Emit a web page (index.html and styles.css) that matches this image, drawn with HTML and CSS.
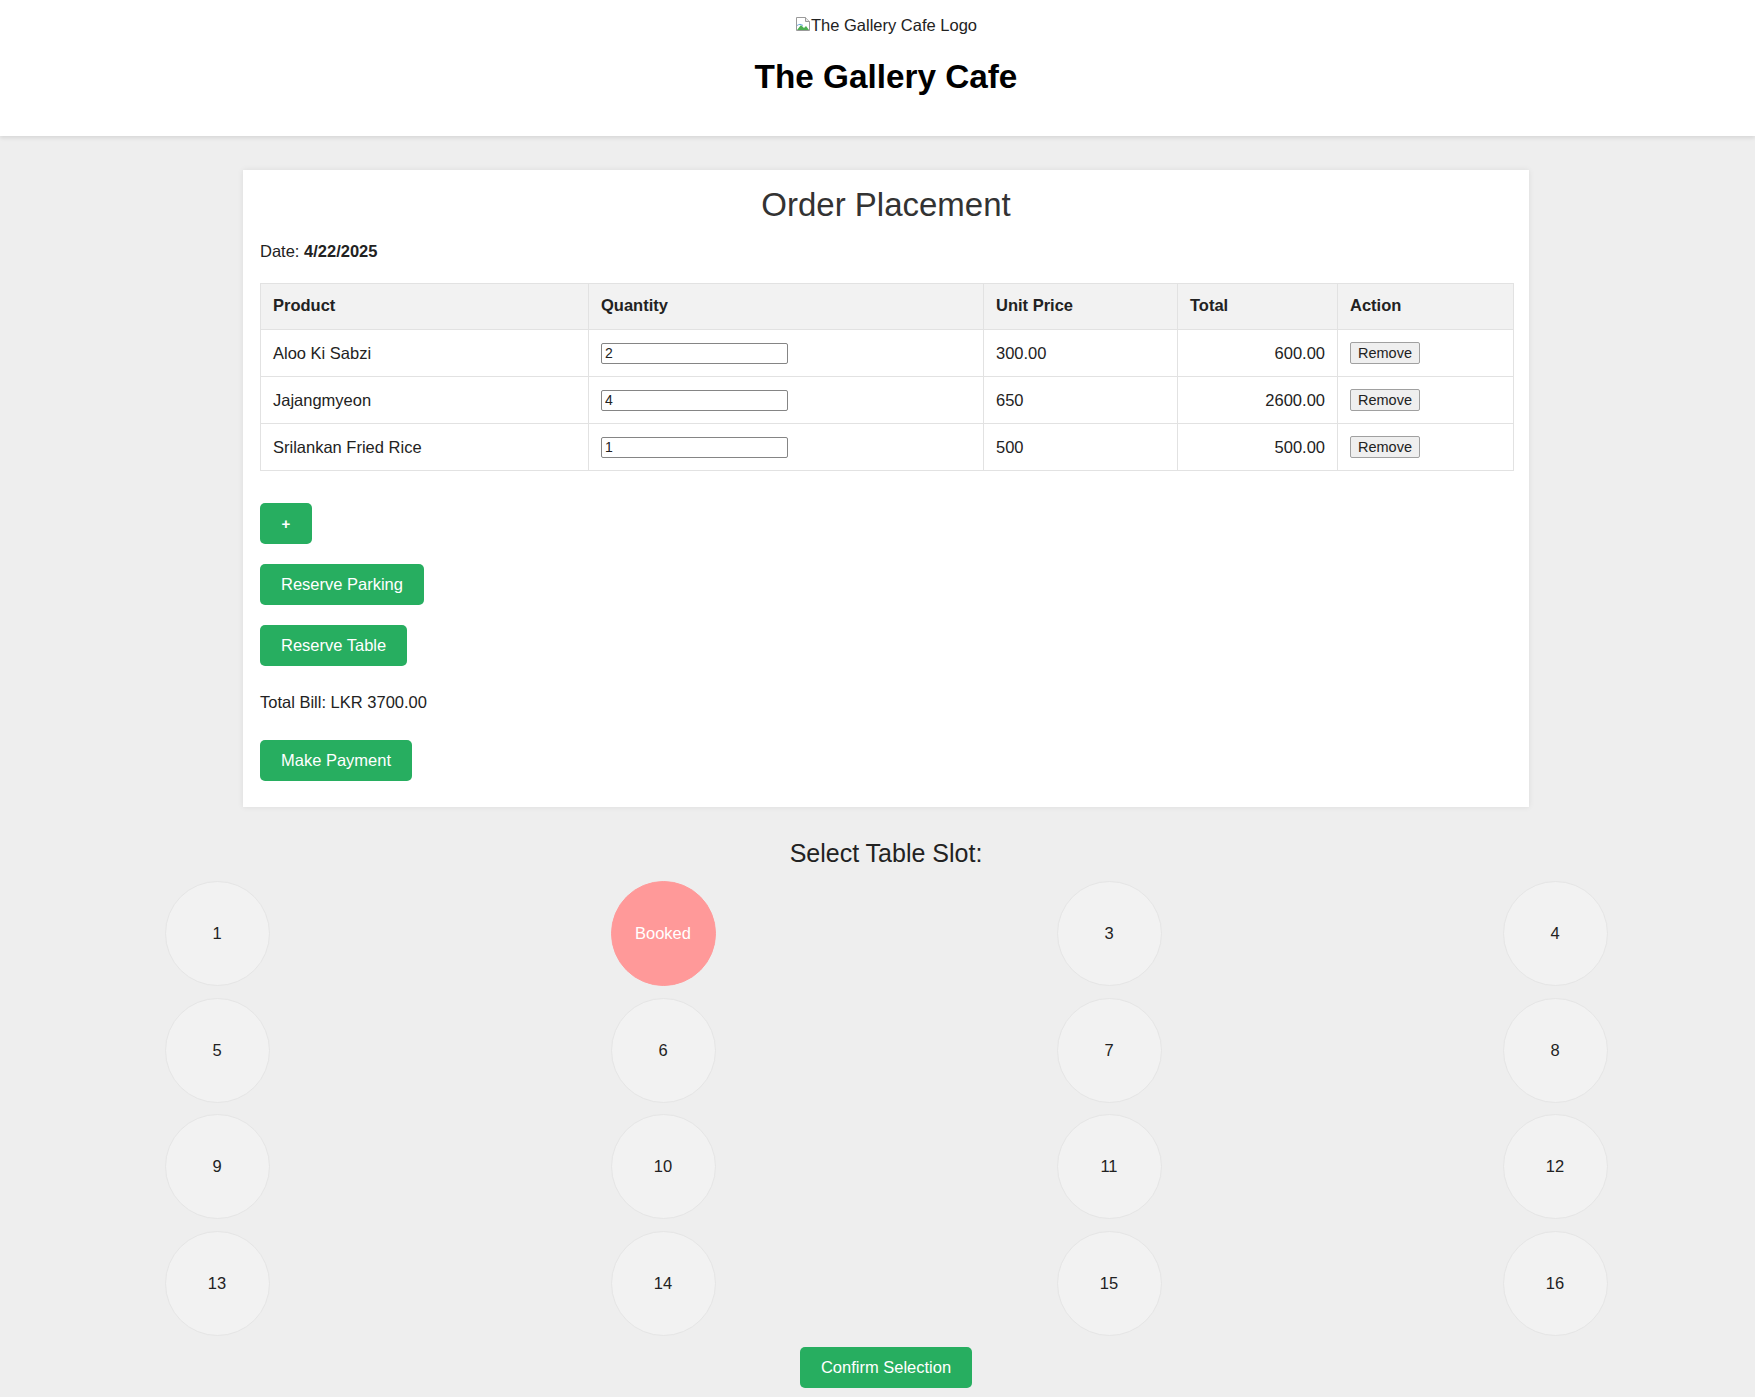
FILE: index.html
```html
<!DOCTYPE html>
<html lang="en">
<head>
<meta charset="utf-8">
<title>The Gallery Cafe - Order Placement</title>
<link rel="stylesheet" href="styles.css">
</head>
<body>
<header class="site-header">
  <div class="header-inner">
    <div class="logo-alt">
      <svg class="broken-img" width="16" height="16" viewBox="0 0 16 16" aria-hidden="true">
        <path d="M1.5 1.5h9l4 4v9h-13z" fill="#fff" stroke="#9a9a9a"/>
        <path d="M10.5 1.5v4h4" fill="#e8e8e8" stroke="#9a9a9a"/>
        <path d="M2 14l4-5 3 3 2-2 3 4z" fill="#4caf50"/>
        <path d="M2 9.5c2-1.5 4-1.5 6 0" fill="none" stroke="#6fa8dc" stroke-width="1"/>
      </svg><span>The Gallery Cafe Logo</span>
    </div>
    <h1 class="site-title">The Gallery Cafe</h1>
  </div>
</header>

<main class="page">
  <section class="card">
    <h2 class="card-title">Order Placement</h2>
    <p class="date">Date: <strong>4/22/2025</strong></p>

    <table class="order-table">
      <colgroup>
        <col class="c-product">
        <col class="c-qty">
        <col class="c-price">
        <col class="c-total">
        <col class="c-action">
      </colgroup>
      <thead>
        <tr>
          <th>Product</th>
          <th>Quantity</th>
          <th>Unit Price</th>
          <th>Total</th>
          <th>Action</th>
        </tr>
      </thead>
      <tbody>
        <tr>
          <td>Aloo Ki Sabzi</td>
          <td><input class="qty" type="text" value="2"></td>
          <td>300.00</td>
          <td class="num">600.00</td>
          <td><button class="remove">Remove</button></td>
        </tr>
        <tr>
          <td>Jajangmyeon</td>
          <td><input class="qty" type="text" value="4"></td>
          <td>650</td>
          <td class="num">2600.00</td>
          <td><button class="remove">Remove</button></td>
        </tr>
        <tr>
          <td>Srilankan Fried Rice</td>
          <td><input class="qty" type="text" value="1"></td>
          <td>500</td>
          <td class="num">500.00</td>
          <td><button class="remove">Remove</button></td>
        </tr>
      </tbody>
    </table>

    <div class="actions">
      <button class="btn btn-add">+</button>
      <button class="btn">Reserve Parking</button>
      <button class="btn">Reserve Table</button>
      <p class="total-bill">Total Bill: LKR 3700.00</p>
      <button class="btn">Make Payment</button>
    </div>
  </section>

  <section class="slots">
    <h3 class="slots-title">Select Table Slot:</h3>
    <div class="slot-grid">
      <div class="slot">1</div>
      <div class="slot booked">Booked</div>
      <div class="slot">3</div>
      <div class="slot">4</div>
      <div class="slot">5</div>
      <div class="slot">6</div>
      <div class="slot">7</div>
      <div class="slot">8</div>
      <div class="slot">9</div>
      <div class="slot">10</div>
      <div class="slot">11</div>
      <div class="slot">12</div>
      <div class="slot">13</div>
      <div class="slot">14</div>
      <div class="slot">15</div>
      <div class="slot">16</div>
    </div>
    <div class="confirm-wrap">
      <button class="btn">Confirm Selection</button>
    </div>
  </section>
</main>
</body>
</html>
```

FILE: styles.css
```css
* {
  box-sizing: border-box;
}

html, body {
  margin: 0;
  padding: 0;
}

body {
  background: #eeeeee;
  font-family: "Liberation Sans", Arial, sans-serif;
  font-size: 16.5px;
  color: #222;
}

.site-header {
  background: #fff;
  box-shadow: 0 2px 4px rgba(0, 0, 0, 0.1);
  height: 136px;
}

.header-inner {
  padding: 15px 0 0 17px;
  text-align: center;
}

.logo-alt {
  height: 20px;
  line-height: 20px;
  display: flex;
  justify-content: center;
  align-items: center;
  color: #222;
  font-size: 16.5px;
}

.broken-img {
  display: block;
  margin-top: -2px;
}

.site-title {
  margin: 22px 0 0;
  font-size: 33.3px;
  line-height: 39px;
  font-weight: bold;
  color: #000;
}

.page {
  padding-left: 17px;
}

.card {
  width: 1286px;
  margin: 34px auto 0;
  background: #fff;
  padding: 15px 17px 26px;
  box-shadow: 0 0 6px rgba(0, 0, 0, 0.08);
}

.card-title {
  margin: 0 0 17px;
  text-align: center;
  font-size: 33px;
  line-height: 39px;
  font-weight: normal;
  color: #333;
}

.date {
  margin: 0 0 22px;
  line-height: 20px;
}

.order-table {
  width: 100%;
  border-collapse: collapse;
  table-layout: fixed;
}

.c-product { width: 328px; }
.c-qty { width: 395px; }
.c-price { width: 194px; }
.c-total { width: 160px; }
.c-action { width: 176px; }

.order-table th,
.order-table td {
  border: 1px solid #e2e2e2;
  padding: 12px 12px;
  line-height: 20px;
  text-align: left;
  vertical-align: middle;
}

.order-table th {
  background: #f2f2f2;
  font-weight: bold;
  padding-top: 11px;
  padding-bottom: 14px;
}

.order-table td.num {
  text-align: right;
}

.qty {
  display: block;
  width: 187px;
  height: 21px;
  margin: 0;
  padding: 1px 3px;
  border: 1px solid #858585;
  border-radius: 2px;
  font-family: "Liberation Sans", Arial, sans-serif;
  font-size: 14px;
  color: #222;
  background: #fff;
}

.remove {
  height: 22px;
  padding: 0 7px;
  border: 1px solid #a0a0a0;
  border-radius: 2px;
  background: #efefef;
  font-family: "Liberation Sans", Arial, sans-serif;
  font-size: 14.5px;
  color: #222;
  display: block;
}

.actions {
  display: flex;
  flex-direction: column;
  align-items: flex-start;
  padding-top: 32px;
}

.btn {
  display: inline-block;
  height: 41px;
  padding: 0 21px;
  border: none;
  border-radius: 5px;
  background: #27ae60;
  color: #fff;
  font-family: "Liberation Sans", Arial, sans-serif;
  font-size: 16.5px;
  line-height: 41px;
}

.actions .btn + .btn {
  margin-top: 20px;
}

.btn-add {
  width: 52px;
  padding: 0;
  font-size: 15px;
  font-weight: bold;
}

.total-bill {
  margin: 26px 0 28px;
  line-height: 20px;
  color: #222;
}

.slots {
  padding-top: 32px;
  text-align: center;
}

.slots-title {
  margin: 0;
  font-size: 25px;
  line-height: 29px;
  font-weight: normal;
  color: #222;
}

.slot-grid {
  width: 1443px;
  margin: 13px auto 0;
  display: grid;
  grid-template-columns: repeat(4, 105px);
  justify-content: space-between;
  row-gap: 11.7px;
}

.slot {
  width: 105px;
  height: 105px;
  border-radius: 50%;
  background: #f2f2f2;
  border: 1px solid #e5e5e5;
  display: flex;
  align-items: center;
  justify-content: center;
  font-size: 16.5px;
  color: #222;
}

.slot.booked {
  background: #ff9999;
  border-color: #ff9999;
  color: #fff;
}

.confirm-wrap {
  margin-top: 11px;
}
```
